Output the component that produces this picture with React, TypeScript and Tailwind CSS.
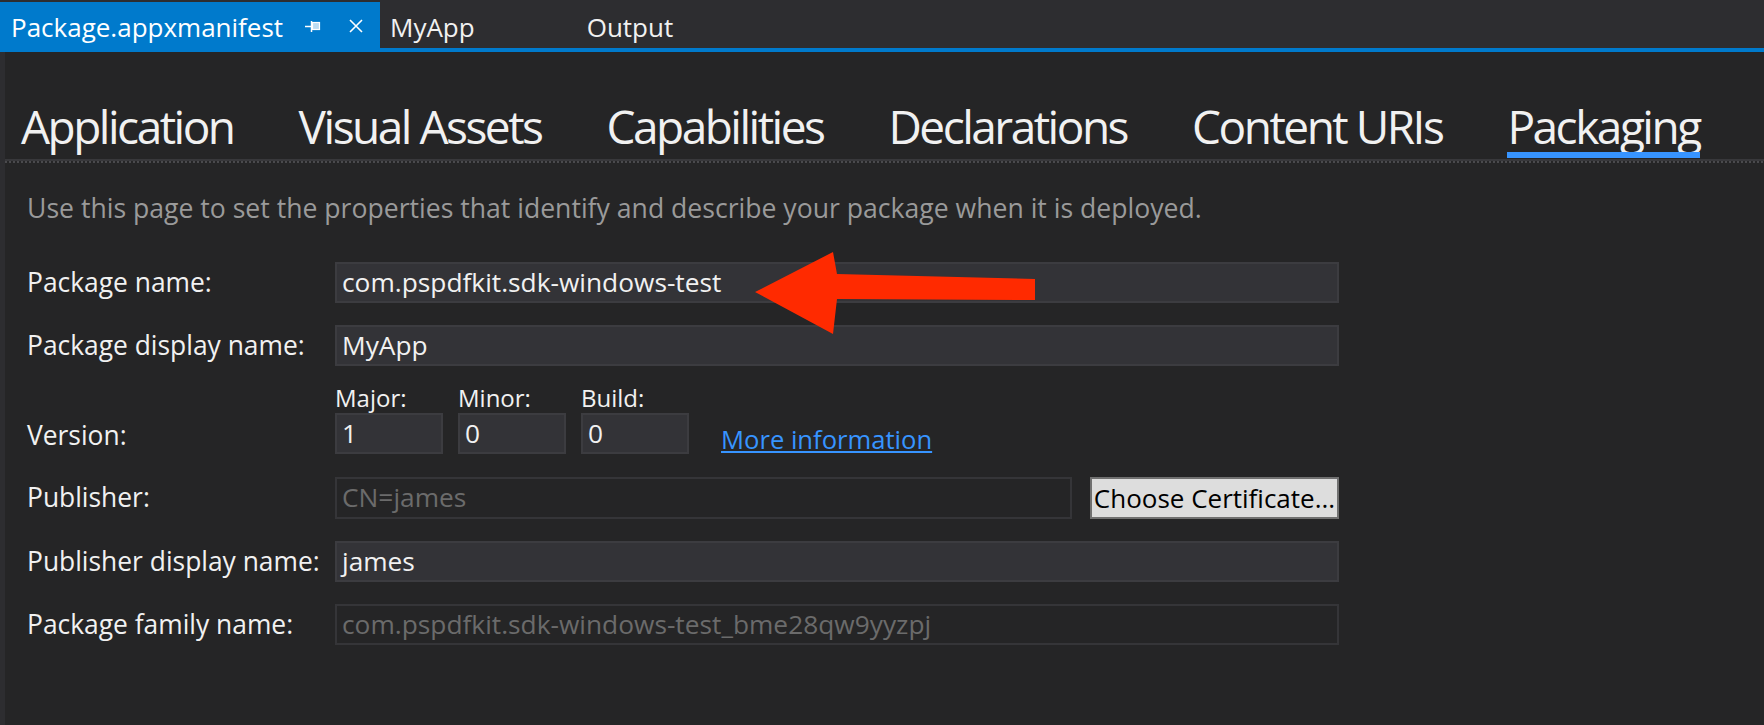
import React from 'react';

const FONT = { fontFamily: '"Open Sans", "Noto Sans", sans-serif' };

const sections = ['Application', 'Visual Assets', 'Capabilities', 'Declarations', 'Content URIs', 'Packaging'];

function PinIcon() {
  return (
    <svg width="16" height="12" viewBox="0 0 16 12" className="shrink-0">
      <line x1="0" y1="6.5" x2="6" y2="6.5" stroke="#ffffff" strokeWidth="1.5" />
      <line x1="6.5" y1="1" x2="6.5" y2="12" stroke="#ffffff" strokeWidth="1.5" />
      <rect x="7.5" y="2.5" width="7" height="7" fill="#bcdcf2" stroke="#ffffff" strokeWidth="1.2" />
    </svg>
  );
}

function CloseIcon() {
  return (
    <svg width="16" height="16" viewBox="0 0 16 16" className="shrink-0">
      <path d="M2 2 L14 14 M14 2 L2 14" stroke="#ffffff" strokeWidth="1.6" />
    </svg>
  );
}

function Field({ value, disabled, className }: { value: string; disabled?: boolean; className?: string }) {
  return (
    <div
      className={`flex h-[41px] items-center border-2 px-[5px] text-[26.3px] ${
        disabled
          ? 'border-[#353538] bg-[#252526] text-[#6b6b6b]'
          : 'border-[#3c3c40] bg-[#333337] text-[#f1f1f1]'
      } ${className ?? ''}`}
    >
      {value}
    </div>
  );
}

function Row({ label, children, className }: { label: string; children: React.ReactNode; className?: string }) {
  return (
    <div className={`flex items-center ${className ?? ''}`}>
      <div className="w-[308px] shrink-0 text-[26.4px] text-[#f1f1f1]">{label}</div>
      {children}
    </div>
  );
}

export default function App() {
  return (
    <div className="flex h-[725px] w-[1764px] flex-col overflow-hidden bg-[#252526]" style={FONT}>
      {/* document tabs */}
      <div className="flex h-[48px] items-end bg-[#2d2d30] text-[26px] text-[#f1f1f1]">
        <div className="flex h-[46px] w-[380px] items-center bg-[#007acc] pl-[11px] pt-[4px] text-white">
          <span>Package.appxmanifest</span>
          <span className="ml-[22px] -mt-[3px]"><PinIcon /></span>
          <span className="ml-[27px] -mt-[3px]"><CloseIcon /></span>
        </div>
        <div className="flex h-[46px] items-center pl-[10px] pt-[4px]">MyApp</div>
        <div className="flex h-[46px] items-center pl-[112px] pt-[4px]">Output</div>
      </div>
      <div className="h-[4px] bg-[#007acc]" />

      <div className="flex flex-1">
        <div className="w-[5px] bg-[#2d2d30]" />
        <div className="flex-1">
          {/* section tabs */}
          <div className="flex gap-[65px] pl-[16px] pt-[48px] text-[46px] tracking-[-2.5px] text-[#f1f1f1]">
            {sections.map((s) => (
              <div key={s} className="flex flex-col">
                <span className="leading-[52px]">{s}</span>
                <div className={`h-[6px] ${s === 'Packaging' ? 'bg-[#3794ff]' : ''}`} />
              </div>
            ))}
          </div>
          <div className="mt-[1px] h-[2px] bg-[#38383b]" />
          <div className="h-[2px] bg-[repeating-linear-gradient(90deg,#4a4a4d_0_2px,transparent_2px_4px)]" />

          {/* form */}
          <div className="pl-[22px]">
            <p className="mt-[27px] text-[26.6px] leading-[36px] text-[#9a9a9a]">
              Use this page to set the properties that identify and describe your package when it is deployed.
            </p>

            <Row label="Package name:" className="mt-[36px]">
              <Field value="com.pspdfkit.sdk-windows-test" className="w-[1004px]" />
            </Row>
            <Row label="Package display name:" className="mt-[22px]">
              <Field value="MyApp" className="w-[1004px]" />
            </Row>

            <div className="mt-[17px] flex items-end">
              <div className="flex h-[41px] w-[308px] shrink-0 items-center pt-[4px] text-[26.4px] text-[#f1f1f1]">Version:</div>
              <div className="flex items-end">
                {[
                  ['Major:', '1'],
                  ['Minor:', '0'],
                  ['Build:', '0'],
                ].map(([l, v], i) => (
                  <div key={l} className={`flex flex-col ${i > 0 ? 'ml-[15px]' : ''}`}>
                    <span className="h-[30px] text-[24px] leading-[30px] text-[#f1f1f1]">{l}</span>
                    <Field value={v} className="w-[108px]" />
                  </div>
                ))}
                <a className="mb-[-5px] ml-[32px] text-[25.6px] text-[#3794ff] underline">More information</a>
              </div>
            </div>

            <Row label="Publisher:" className="mt-[23px]">
              <Field value="CN=james" disabled className="h-[42px] w-[737px]" />
              <button className="ml-[18px] flex h-[42px] w-[249px] items-center justify-center border-2 border-[#707070] bg-[#dddddd] text-[26px] text-black">
                Choose Certificate...
              </button>
            </Row>
            <Row label="Publisher display name:" className="mt-[22px]">
              <Field value="james" className="w-[1004px]" />
            </Row>
            <Row label="Package family name:" className="mt-[22px]">
              <Field value="com.pspdfkit.sdk-windows-test_bme28qw9yyzpj" disabled className="w-[1004px]" />
            </Row>
          </div>
        </div>
      </div>

      {/* annotation arrow */}
      <svg className="pointer-events-none absolute left-[755px] top-[252px]" width="290" height="85" viewBox="0 0 290 85">
        <polygon points="0,40 78,0 82,22 280,27 280,48 82,47 78,82" fill="#ff2a00" />
      </svg>
    </div>
  );
}
